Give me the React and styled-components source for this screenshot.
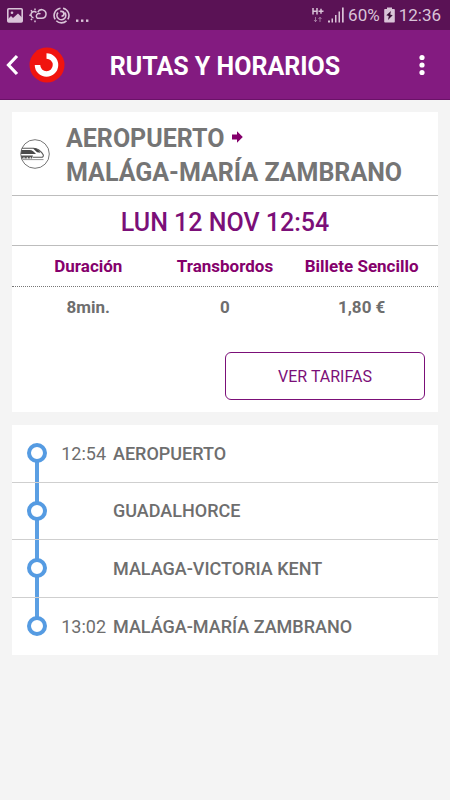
import React from "react";
import styled, { createGlobalStyle } from "styled-components";

const GlobalStyle = createGlobalStyle`
  * {
    box-sizing: border-box;
  }
  body {
    margin: 0;
    background-color: #f4f4f4;
    color: #6e6e6e;
    font-family: Roboto, "Liberation Sans", sans-serif;
  }
`;

const StatusBar = styled.div`
  display: flex;
  align-items: center;
  justify-content: space-between;
  height: 30px;
  padding: 0 9px 0 7px;
  background-color: #5a1255;
  color: #d9c4d8;
`;

const StatusGroup = styled.div`
  display: flex;
  align-items: center;
  gap: ${({ $gap }) => $gap}px;
  font-size: 17px;
  line-height: 30px;
  svg {
    flex: none;
  }
`;

const Header = styled.header`
  display: flex;
  align-items: center;
  height: 70px;
  padding: 0 4px;
  border-bottom: 1px solid #6a1268;
  background-color: #831b80;
  color: #fff;
`;

const IconBtn = styled.button`
  display: flex;
  align-items: center;
  justify-content: center;
  width: ${({ $width }) => $width}px;
  height: 44px;
  padding: 0;
  border: 0;
  background: none;
  color: inherit;
  cursor: pointer;
`;

const Title = styled.h1`
  flex: 1;
  margin: 0 22px 0 0;
  padding-top: 4px;
  font-size: 25px;
  font-weight: 700;
  text-align: center;
`;

const Main = styled.main`
  display: flex;
  flex-direction: column;
  gap: 13px;
  padding: 12px;
`;

const Card = styled.section`
  background-color: #fff;
`;

const Route = styled.div`
  display: flex;
  align-items: center;
  gap: 16px;
  padding: 6px 8px 5px;
  border-bottom: 1px solid #bdbdbd;
`;

const RouteName = styled.h2`
  margin: 0;
  padding-top: 4px;
  color: #757575;
  font-size: 25px;
  font-weight: 700;
  line-height: 34px;
  svg {
    margin-left: 8px;
    vertical-align: 4px;
  }
`;

const Departure = styled.p`
  height: 50px;
  margin: 0;
  padding-top: 2px;
  border-bottom: 1px solid #bdbdbd;
  color: #7b0f78;
  font-size: 25px;
  font-weight: 500;
  line-height: 50px;
  text-align: center;
`;

const Summary = styled.table`
  display: block;
  width: 100%;
  font-size: 17px;
  font-weight: 700;
  line-height: 40px;
  text-align: center;
  thead,
  tbody {
    display: block;
  }
  th,
  td {
    padding: 0;
    font-weight: inherit;
  }
`;

const SummaryRow = styled.tr`
  display: grid;
  grid-template-columns: repeat(3, 1fr);
  padding: 0 8px;
  border-bottom: ${({ $head }) => ($head ? "1px dotted #777" : "0")};
  color: ${({ $head }) => ($head ? "#85006c" : "inherit")};
`;

const Actions = styled.div`
  display: flex;
  justify-content: flex-end;
  padding: 25px 13px 12px;
`;

const FaresBtn = styled.button`
  width: 200px;
  height: 48px;
  border: 1px solid #7b0f78;
  border-radius: 6px;
  background-color: #fff;
  color: #7b0f78;
  font-family: inherit;
  font-size: 16px;
  cursor: pointer;
`;

const StopList = styled.ol`
  display: grid;
  grid-auto-rows: 1fr;
  min-height: 230px;
  margin: 0;
  padding: 0;
  list-style: none;
`;

const Stop = styled.li`
  position: relative;
  display: grid;
  grid-template-columns: 20px 52px 1fr;
  column-gap: 7px;
  align-items: center;
  padding-left: 15px;
  font-size: 18px;
  &:not(:last-child) {
    border-bottom: 1px solid #cfcfcf;
  }
  /* track that joins this stop to its neighbours */
  &::before {
    content: "";
    position: absolute;
    left: 23px;
    top: 0;
    bottom: 0;
    width: 4px;
    background-color: #5b9fe3;
  }
  &:first-child::before {
    top: 50%;
  }
  &:last-child::before {
    bottom: 50%;
  }
`;

const StopDot = styled.span`
  position: relative;
  width: 20px;
  height: 20px;
  border: 4px solid #559be2;
  border-radius: 50%;
  background-color: #fff;
`;

const StopTime = styled.time`
  grid-column: 2;
  text-align: right;
`;

const StopName = styled.span`
  grid-column: 3;
  font-weight: 500;
`;

const PictureIcon = () => (
  <svg width="16" height="15" viewBox="0 0 16 15" aria-hidden="true">
    <rect x="0.8" y="0.8" width="14.4" height="13.2" rx="1" fill="none" stroke="currentColor" strokeWidth="1.6" />
    <circle cx="5" cy="4.8" r="1.3" fill="currentColor" />
    <path d="M1 11l3-3 2 2 5-4.500 4 4V14H1z" fill="currentColor" />
  </svg>
);

const WeatherIcon = () => (
  <svg width="18" height="15" viewBox="0 0 18 15" fill="none" stroke="currentColor" strokeWidth="1.5" aria-hidden="true">
    <path d="M7.500 4.500A3.200 3.200 0 1 0 4.500 9.800" />
    <path d="M11.500 6A2.500 2.500 0 1 0 8.500 10.300H12.800A4.300 4.300 0 1 0 8.800 4.200" />
    <path d="M6 0.500v1.700M1.900 2.300l1.200 1.200M0.300 7.200H2M1.900 12l1.200-1.200M6 12.500v1.700" />
  </svg>
);

const SwirlIcon = () => (
  <svg width="17" height="17" viewBox="0 0 17 17" fill="none" stroke="currentColor" strokeWidth="1.600" aria-hidden="true">
    <path d="M10 1.200A7.400 7.400 0 0 1 14.800 12.400M13.500 13.900A7.400 7.400 0 0 1 3.300 13.800M2.200 12.400A7.400 7.400 0 0 1 7.500 1.200" />
    <path d="M5 5.500A4.400 4.400 0 1 0 11.800 5.600M7.200 4.300H8.500a2.400 2.400 0 0 1 0 4.800" strokeWidth="1.700" />
  </svg>
);

const DotsIcon = () => (
  <svg width="13" height="15" viewBox="0 0 13 15" fill="currentColor" aria-hidden="true">
    <rect y="11.500" width="2.400" height="2.400" />
    <rect x="5" y="11.500" width="2.400" height="2.400" />
    <rect x="10" y="11.500" width="2.400" height="2.400" />
  </svg>
);

const DataIcon = () => (
  <svg width="12" height="16" viewBox="0 0 12 16" fill="none" stroke="currentColor" strokeWidth="1.500" aria-hidden="true">
    <path d="M1 1v6.500M5 1v6.500M1 4.200H5M6.500 4.200H11.500M9 1.800V6.700" />
    <path d="M3.500 10v4.500M2 13l1.500 1.700L5 13M8 15v-4.500M6.500 12L8 10.300 9.500 12" strokeWidth="1" opacity="0.55" />
  </svg>
);

const SignalIcon = () => (
  <svg width="16" height="16" viewBox="0 0 16 16" fill="currentColor" aria-hidden="true">
    <rect x="0" y="13.500" width="2" height="2" />
    <rect x="3.500" y="11.500" width="1.500" height="4" />
    <rect x="7" y="8" width="1.500" height="7.500" />
    <rect x="10.500" y="4.500" width="1.500" height="11" />
    <rect x="14" y="0.500" width="1.700" height="15" />
  </svg>
);

const BatteryIcon = () => (
  <svg width="11" height="16" viewBox="0 0 11 16" aria-hidden="true">
    <path d="M3 0.500h5v1.500h2a.8.8 0 0 1 .8.800v12a.8.8 0 0 1-.8.800H1a.8.8 0 0 1-.8-.8v-12A.8.8 0 0 1 1 2h2z" fill="currentColor" />
    <path d="M7 4L2.300 8.300l2.500.8L4 13l4.700-4.700-2.500-.8z" fill="#3a0f37" />
  </svg>
);

const BackIcon = () => (
  <svg width="14" height="22" viewBox="0 0 14 22" fill="none" stroke="currentColor" strokeWidth="3.200" aria-hidden="true">
    <path d="M12 2L3.500 11L12 20" />
  </svg>
);

const Logo = () => (
  <svg width="36" height="36" viewBox="0 0 36 36" role="img" aria-label="Cercanías">
    <circle cx="18" cy="18" r="17.500" fill="#f0140f" />
    <path d="M17.500 9A9 9 0 1 1 8.500 18" fill="none" stroke="#fff" strokeWidth="5.500" />
  </svg>
);

const MoreIcon = () => (
  <svg width="6" height="22" viewBox="0 0 6 22" fill="currentColor" aria-hidden="true">
    <circle cx="3" cy="3.500" r="2.600" />
    <circle cx="3" cy="11" r="2.600" />
    <circle cx="3" cy="18.500" r="2.600" />
  </svg>
);

const TrainIcon = () => (
  <svg width="30" height="30" viewBox="0 0 30 30" aria-hidden="true">
    <circle cx="15" cy="15" r="14.300" fill="#fff" stroke="#666" strokeWidth="0.900" />
    <path d="M2 9.200H13.500C18 9.200 21 12 23.200 15.800c.6 1.400-.4 2.500-2 2.500H13" fill="none" stroke="#555" strokeWidth="1.100" />
    <path d="M1.300 11H9.500c3 0 4.500 2 6.500 4H1z" fill="#4a4a4a" />
    <path d="M13 9.500h2.500c2.200.6 3.800 2.300 5 4.300l-3.500-.5z" fill="#444" />
    <path d="M1 16.600H13l-1 2.900H1.500z" fill="#555" />
    <path d="M4 18v2M7.300 18v2M10.300 18v2" stroke="#fff" strokeWidth="0.800" />
    <path d="M2.300 20.600H23.500" stroke="#888" strokeWidth="0.900" />
  </svg>
);

const ArrowIcon = () => (
  <svg width="11" height="12" viewBox="0 0 11 12" aria-hidden="true">
    <path d="M0 3.500H5V0.300L10.800 6L5 11.700V8.500H0z" fill="#85006c" />
  </svg>
);

const stops = [
  { time: "12:54", name: "AEROPUERTO" },
  { name: "GUADALHORCE" },
  { name: "MALAGA-VICTORIA KENT" },
  { time: "13:02", name: "MALÁGA-MARÍA ZAMBRANO" },
];

const App = () => {
  return (
    <>
      <GlobalStyle />
      <StatusBar>
        <StatusGroup $gap={6}>
          <PictureIcon />
          <WeatherIcon />
          <SwirlIcon />
          <DotsIcon />
        </StatusGroup>
        <StatusGroup $gap={4}>
          <DataIcon />
          <SignalIcon />
          <span>60%</span>
          <BatteryIcon />
          <span>12:36</span>
        </StatusGroup>
      </StatusBar>
      <Header>
        <IconBtn $width={16} aria-label="Volver">
          <BackIcon />
        </IconBtn>
        <IconBtn $width={54} aria-label="Inicio">
          <Logo />
        </IconBtn>
        <Title>RUTAS Y HORARIOS</Title>
        <IconBtn $width={48} aria-label="Más opciones">
          <MoreIcon />
        </IconBtn>
      </Header>
      <Main>
        <Card>
          <Route>
            <TrainIcon />
            <RouteName>
              AEROPUERTO
              <ArrowIcon />
              <br />
              MALÁGA-MARÍA ZAMBRANO
            </RouteName>
          </Route>
          <Departure>LUN 12 NOV 12:54</Departure>
          <Summary>
            <thead>
              <SummaryRow $head>
                <th scope="col">Duración</th>
                <th scope="col">Transbordos</th>
                <th scope="col">Billete Sencillo</th>
              </SummaryRow>
            </thead>
            <tbody>
              <SummaryRow>
                <td>8min.</td>
                <td>0</td>
                <td>1,80 €</td>
              </SummaryRow>
            </tbody>
          </Summary>
          <Actions>
            <FaresBtn>VER TARIFAS</FaresBtn>
          </Actions>
        </Card>
        <Card>
          <StopList>
            {stops.map(({ time, name }) => (
              <Stop key={name}>
                <StopDot />
                {time && <StopTime>{time}</StopTime>}
                <StopName>{name}</StopName>
              </Stop>
            ))}
          </StopList>
        </Card>
      </Main>
    </>
  );
};

export default App;
